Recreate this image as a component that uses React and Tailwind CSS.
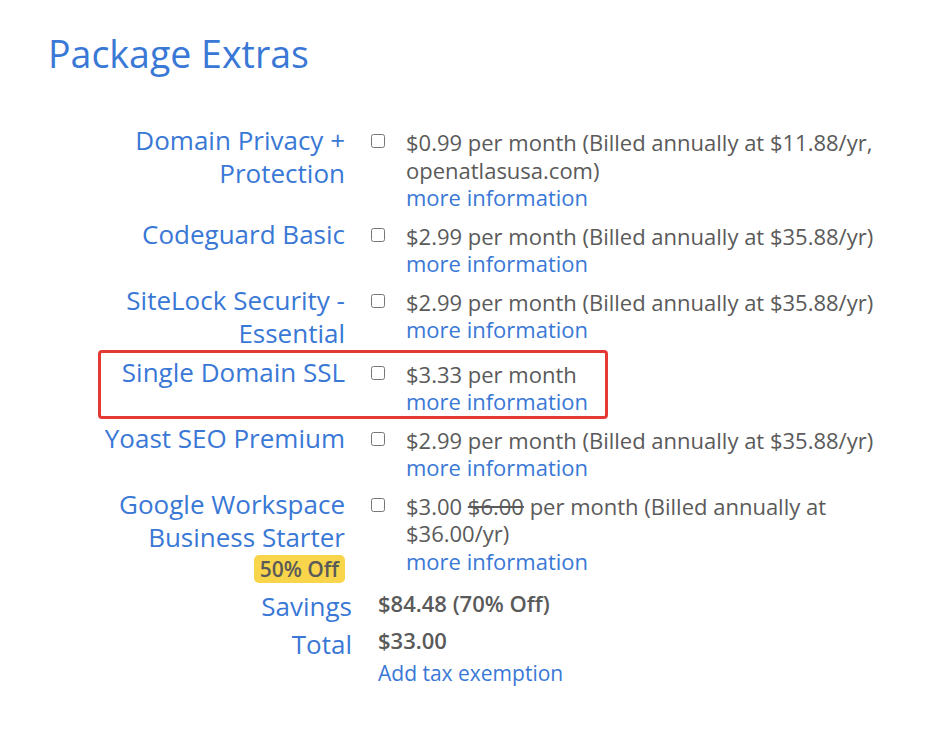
import React from "react";

const extras = [
  {
    name: ["Domain Privacy +", "Protection"],
    price: "$0.99 per month (Billed annually at $11.88/yr, openatlasusa.com)",
  },
  { name: ["Codeguard Basic"], price: "$2.99 per month (Billed annually at $35.88/yr)" },
  { name: ["SiteLock Security -", "Essential"], price: "$2.99 per month (Billed annually at $35.88/yr)" },
  { name: ["Single Domain SSL"], price: "$3.33 per month", highlight: true },
  { name: ["Yoast SEO Premium"], price: "$2.99 per month (Billed annually at $35.88/yr)" },
];

const Row = ({ name, children, highlight, badge }) => (
  <div className="relative flex items-start pb-[6px]">
    {highlight && (
      <div className="pointer-events-none absolute left-[50px] top-[-6px] h-[69px] w-[510px] rounded-[4px] border-[3px] border-[#e53935]" />
    )}
    <div className="w-[297px] shrink-0 text-right text-[26px] leading-[33px] text-[#3a78d6]">
      {name.map((n) => (
        <div key={n}>{n}</div>
      ))}
      {badge && (
        <div className="mt-px flex justify-end">
          <span className="block rounded-[5px] bg-[#f8d54a] px-[6px] text-[21px] font-semibold leading-[28px] text-[#5a5a5a]">
            {badge}
          </span>
        </div>
      )}
    </div>
    <input
      type="checkbox"
      className="ml-[26px] mt-[10px] h-[14px] w-[14px] shrink-0"
    />
    <div className="ml-[21px] mt-[5px] w-[490px] text-[22px] leading-[27.5px] text-[#5a5a5a]">
      {children}
      <div>
        <a className="text-[#3a78d6]" href="#">
          more information
        </a>
      </div>
    </div>
  </div>
);

export default function App() {
  return (
    <div
      className="min-h-[736px] w-[948px] bg-white pl-[48px] pt-[30px]"
      style={{ fontFamily: '"Open Sans", "Liberation Sans", sans-serif' }}
    >
      <h1 className="text-[37.5px] leading-[48px] text-[#3a78d6]">Package Extras</h1>
      <div className="mt-[46px]">
        {extras.map((e) => (
          <Row key={e.name[0]} name={e.name} highlight={e.highlight}>
            <div>{e.price}</div>
          </Row>
        ))}
        <Row name={["Google Workspace", "Business Starter"]} badge="50% Off">
          <div>
            $3.00 <span className="line-through">$6.00</span> per month (Billed annually at
            $36.00/yr)
          </div>
        </Row>
      </div>
      <div className="-mt-px grid grid-cols-[304px_auto] items-start gap-x-[26px]">
        <div className="text-right text-[26px] leading-[36px] text-[#3a78d6]">Savings</div>
        <div className="text-[22px] font-semibold leading-[30px] text-[#5a5a5a]">
          $84.48 (70% Off)
        </div>
        <div className="text-right text-[26px] leading-[40px] text-[#3a78d6]">Total</div>
        <div className="text-[22px] font-semibold leading-[32px] text-[#5a5a5a]">
          $33.00
          <div className="text-[21px] font-normal leading-[34px]">
            <a className="text-[#3a78d6]" href="#">
              Add tax exemption
            </a>
          </div>
        </div>
      </div>
    </div>
  );
}
